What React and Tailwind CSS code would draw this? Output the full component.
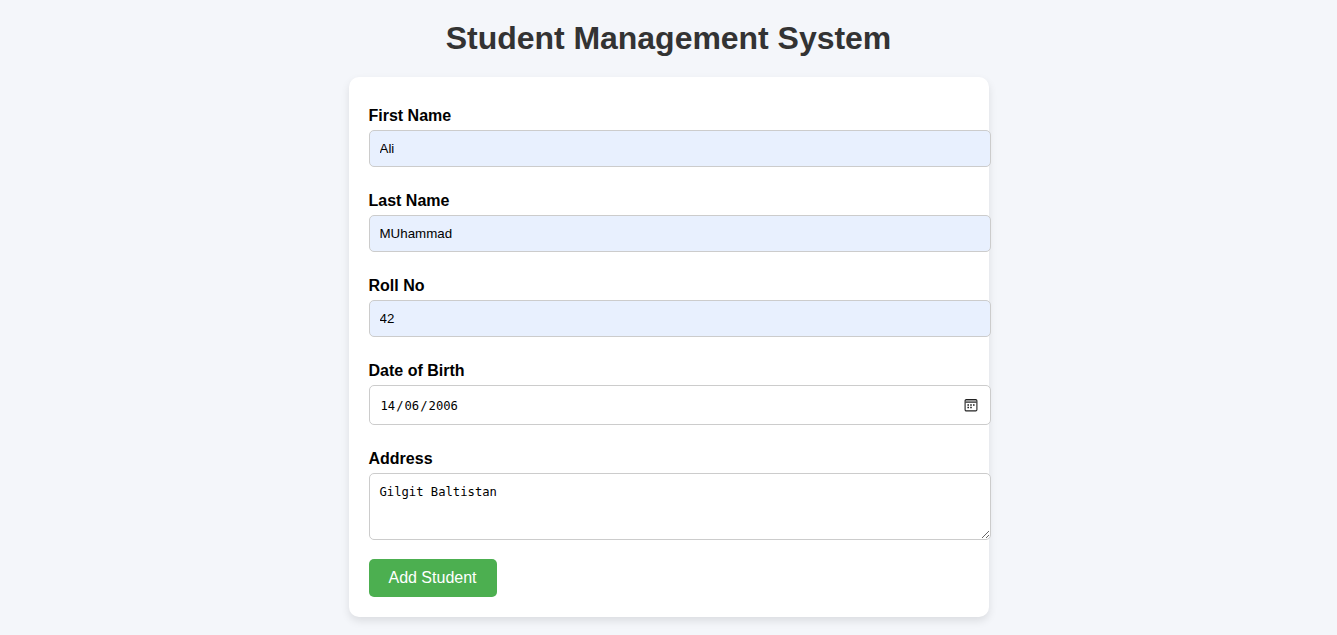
const inputClass =
  'block h-[37px] w-[622px] rounded-[5px] border border-[#ccc] bg-[#e8f0fe] px-[10px] text-[13.333px] text-black outline-none';

function Label({ htmlFor, children }) {
  return (
    <label htmlFor={htmlFor} className="mb-[5px] block text-base leading-[18px] font-bold text-black">
      {children}
    </label>
  );
}

function TextField({ id, label, value }) {
  return (
    <div className="mb-[25px]">
      <Label htmlFor={id}>{label}</Label>
      <input id={id} type="text" defaultValue={value} className={inputClass} />
    </div>
  );
}

function CalendarIcon() {
  return (
    <svg width="14" height="14" viewBox="0 0 14 14" fill="none" className="shrink-0">
      <path d="M1.5 2.5h11v2h-11z" fill="#888" />
      <path d="M1.5 4.5h11" stroke="#444" strokeWidth="0.8" />
      <rect x="1.1" y="1.6" width="11.8" height="11.3" rx="1.2" stroke="#222" strokeWidth="1.1" />
      <path d="M3.4 8.7h1.6v1.5H3.4zM6.2 8.7h1.6v1.5H6.2zM3.4 6.3h1.6v1.5H3.4zM6.2 6.3h1.6v1.5H6.2zM9 6.3h1.6v1.5H9z" fill="#222" />
    </svg>
  );
}

export default function App() {
  return (
    <div className="min-h-screen bg-[#f4f6fa] pt-5 font-['Liberation_Sans',Arial,sans-serif]">
      <h1 className="mb-5 text-center text-[32px] leading-[37px] font-bold tracking-[-0.03px] text-[#333]">
        Student Management System
      </h1>
      <form className="mx-auto h-[540px] w-[640px] rounded-[10px] bg-white px-5 pt-[30px] shadow-[0_4px_8px_rgba(0,0,0,0.1)]">
        <TextField id="first" label="First Name" value="Ali" />
        <TextField id="last" label="Last Name" value="MUhammad" />
        <TextField id="roll" label="Roll No" value="42" />
        <div className="mb-[25px]">
          <Label htmlFor="dob">Date of Birth</Label>
          <div className="flex h-10 w-[622px] items-center rounded-[5px] border border-[#ccc] bg-white pr-[12px] pl-[11px]">
            <div
              id="dob"
              className="flex flex-1 pt-px font-['DejaVu_Sans_Mono',monospace] text-[12.2px] leading-4 text-black"
            >
              <span>14</span>
              <span className="px-px">/</span>
              <span>06</span>
              <span className="px-px">/</span>
              <span>2006</span>
            </div>
            <CalendarIcon />
          </div>
        </div>
        <div className="mb-[19px]">
          <Label htmlFor="address">Address</Label>
          <textarea
            id="address"
            defaultValue="Gilgit Baltistan"
            className="block h-[67px] w-[622px] resize rounded-[5px] border border-[#ccc] bg-white px-[10px] pt-[11px] pb-[9px] font-['DejaVu_Sans_Mono',monospace] text-[12.2px] leading-[15px] text-black outline-none"
          />
        </div>
        <button
          type="button"
          className="block h-[38px] w-32 rounded-[5px] bg-[#4caf50] text-center text-base leading-[18px] text-white"
        >
          Add Student
        </button>
      </form>
    </div>
  );
}
